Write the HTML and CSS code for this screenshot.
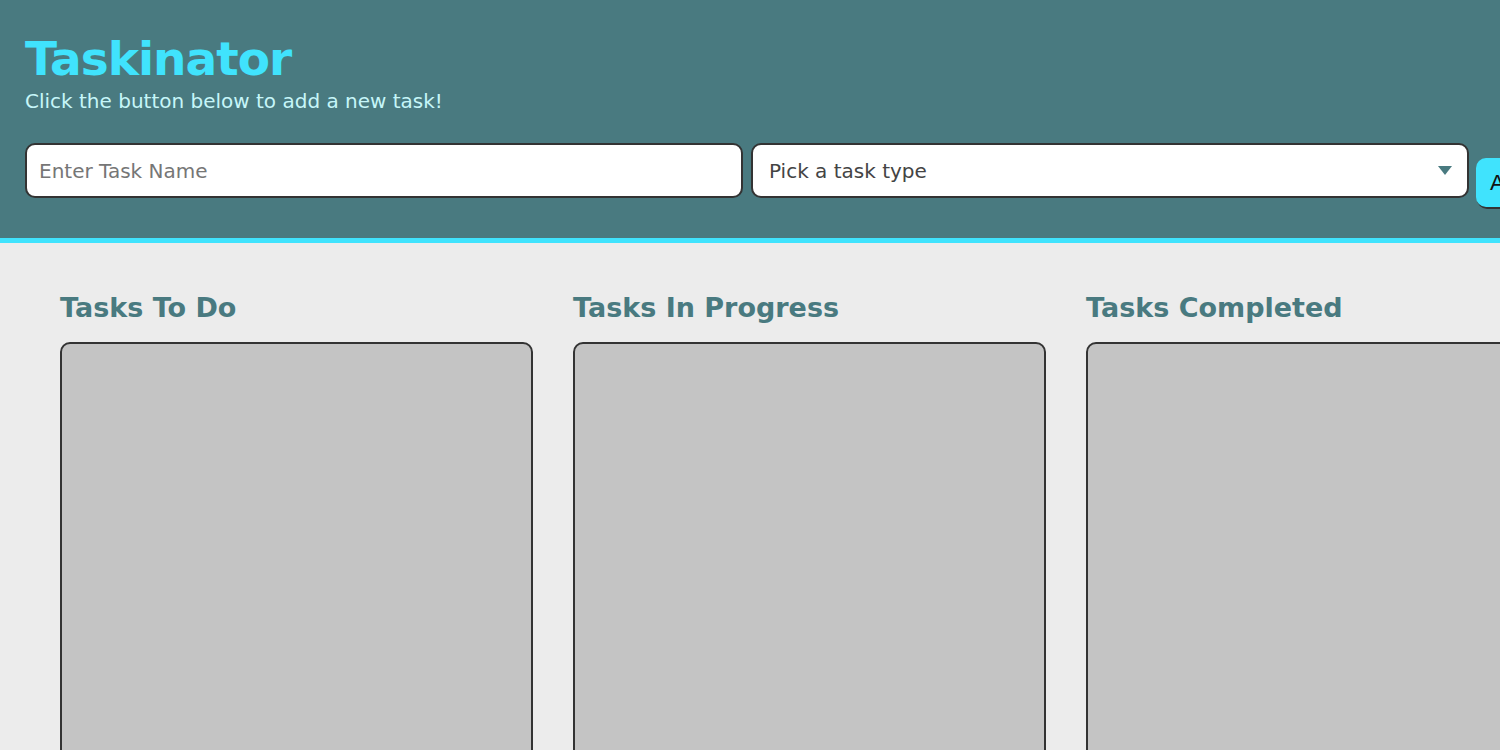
FILE: index.html
```html
<!DOCTYPE html>
<html lang="en">
<head>
  <meta charset="UTF-8" />
  <meta name="viewport" content="width=device-width, initial-scale=1.0"/>
  <title>Taskinator</title>
  <link rel="stylesheet" href="styles.css">
</head>
<body>
  <header class="page-header">
    <h1 class="page-title">Taskinator</h1>
    <p>Click the button below to add a new task!</p>

    <form class="task-form" id="task-form">
      <input type="text" class="text-input" name="task-name" placeholder="Enter Task Name" />
      <div class="select-wrap">
        <select class="select-input" name="task-type">
          <option value="" selected disabled>Pick a task type</option>
          <option value="Web">Web</option>
          <option value="Mobile">Mobile</option>
          <option value="Print">Print</option>
        </select>
        <span class="select-arrow"></span>
      </div>
      <button class="btn" type="submit">Add Task</button>
    </form>
  </header>

  <main class="page-content">
    <section class="task-list-wrapper">
      <h2 class="list-title">Tasks To Do</h2>
      <ul class="task-list" id="tasks-to-do"></ul>
    </section>
    <section class="task-list-wrapper">
      <h2 class="list-title">Tasks In Progress</h2>
      <ul class="task-list" id="tasks-in-progress"></ul>
    </section>
    <section class="task-list-wrapper">
      <h2 class="list-title">Tasks Completed</h2>
      <ul class="task-list" id="tasks-completed"></ul>
    </section>
  </main>
</body>
</html>
```

FILE: styles.css
```css
html {
  overflow: hidden;
}

body {
  margin: 0;
  font-family: Tahoma, "DejaVu Sans", Verdana, sans-serif;
  background-color: #ececec;
  color: #333;
}

.page-header {
  background-color: #497a80;
  border-bottom: 5px solid #40e3fd;
  padding: 30px 25px 30px 25px;
  height: 178px;
  box-sizing: content-box;
}

.page-title {
  margin: 0;
  font-size: 47px;
  letter-spacing: -1px;
  line-height: 58px;
  color: #40e3fd;
}

.page-header p {
  margin: 0;
  font-size: 20px;
  line-height: 26px;
  color: #c6f6f9;
}

.task-form {
  display: flex;
  align-items: flex-start;
  gap: 8px;
  margin-top: 29px;
  width: 1600px;
}

.text-input,
.select-input {
  width: 718px;
  height: 55px;
  box-sizing: border-box;
  border: 2px solid #333;
  border-radius: 10px;
  background-color: #fff;
  font-family: inherit;
  font-size: 20px;
  padding: 0 12px;
  outline: none;
}

.text-input {
  flex-shrink: 0;
}

.text-input::placeholder {
  color: #767676;
}

.select-wrap {
  position: relative;
  flex-shrink: 0;
}

.select-input {
  appearance: none;
  -webkit-appearance: none;
  padding-left: 16px;
  color: #444;
}

.select-arrow {
  position: absolute;
  right: 17px;
  top: 23px;
  border-left: 7px solid transparent;
  border-right: 7px solid transparent;
  border-top: 9px solid #497a80;
  pointer-events: none;
}

.btn {
  flex-shrink: 0;
  margin-top: 15px;
  margin-left: -1px;
  height: 49px;
  padding: 0 14px;
  border: none;
  border-radius: 10px;
  background-color: #40e3fd;
  box-shadow: 1px 2px 0 #333;
  font-family: "Liberation Sans", Arial, sans-serif;
  font-size: 22px;
  color: #111;
  white-space: nowrap;
  cursor: pointer;
}

.page-content {
  display: flex;
  gap: 40px;
  padding: 46px 60px 0 60px;
  width: 1600px;
}

.task-list-wrapper {
  width: 473px;
  flex-shrink: 0;
}

.list-title {
  margin: 0 0 15px 0;
  font-size: 27px;
  line-height: 38px;
  color: #497a80;
}

.task-list {
  margin: 0;
  padding: 0;
  list-style: none;
  min-height: 500px;
  background-color: #c4c4c4;
  border: 2px solid #333;
  border-radius: 10px;
}
```
